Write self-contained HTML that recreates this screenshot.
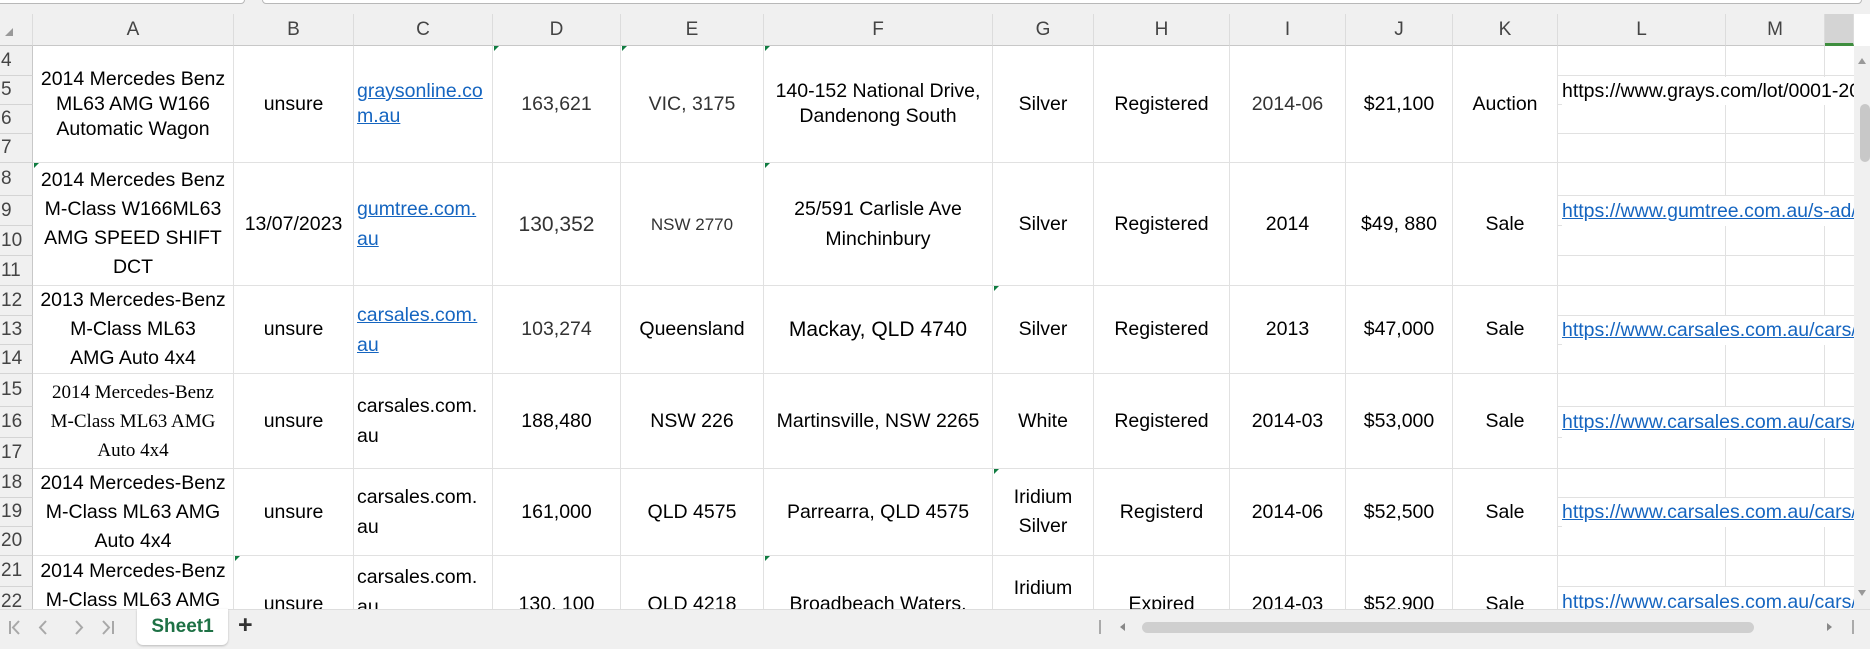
<!DOCTYPE html>
<html><head><meta charset="utf-8"><style>
*{margin:0;padding:0;box-sizing:border-box}
body{width:1870px;height:646px;overflow:hidden;background:#fff;font-family:"Liberation Sans",sans-serif;position:relative}
.a{position:absolute}
.ch{position:absolute;top:14px;height:32px;background:#f0f0f0;border-right:1px solid #dcdcdc;border-bottom:1px solid #c8c8c8;color:#444;font-size:19px;display:flex;align-items:center;justify-content:center}
.rh{position:absolute;left:0;width:33px;background:#f0f0f0;border-bottom:1px solid #d4d4d4;border-right:1px solid #c8c8c8;color:#444;font-size:19px;display:flex;align-items:center;padding-left:1px}
.c{position:absolute;display:flex;align-items:center;justify-content:center;text-align:center;border-right:1px solid #e1e1e1;border-bottom:1px solid #e1e1e1;font-size:19.5px;color:#000;line-height:29px;overflow:hidden;white-space:nowrap}
.lk{color:#1565c0;text-decoration:underline}
.g{color:#333}
.L{position:absolute;left:1562px;width:292px;overflow:hidden;white-space:nowrap;font-size:19.5px;display:flex;align-items:center}
.hl{position:absolute;left:1558px;width:296px;height:1px;background:#e1e1e1}
.tri{position:absolute;width:0;height:0;border-top:5px solid #107c41;border-right:5px solid transparent}
</style></head><body>
<div class="a" style="left:0;top:0;width:1870px;height:14px;background:#f0f0f0"></div>
<div class="a" style="left:-5px;top:-6px;width:250px;height:10px;border:1px solid #b8b8b8;border-radius:4px;background:#fff"></div>
<div class="a" style="left:262px;top:-6px;width:1600px;height:10px;border:1px solid #b8b8b8;border-radius:4px;background:#fff"></div>
<div class="a" style="left:0;top:14px;width:33px;height:32px;background:#f0f0f0;border-right:1px solid #dcdcdc;border-bottom:1px solid #c8c8c8"></div>
<div class="a" style="left:5px;top:28px;width:0;height:0;border-left:8px solid transparent;border-bottom:8px solid #999"></div>

<div class="ch" style="left:33px;width:201px">A</div>
<div class="ch" style="left:234px;width:120px">B</div>
<div class="ch" style="left:354px;width:139px">C</div>
<div class="ch" style="left:493px;width:128px">D</div>
<div class="ch" style="left:621px;width:143px">E</div>
<div class="ch" style="left:764px;width:229px">F</div>
<div class="ch" style="left:993px;width:101px">G</div>
<div class="ch" style="left:1094px;width:136px">H</div>
<div class="ch" style="left:1230px;width:116px">I</div>
<div class="ch" style="left:1346px;width:107px">J</div>
<div class="ch" style="left:1453px;width:105px">K</div>
<div class="ch" style="left:1558px;width:168px">L</div>
<div class="ch" style="left:1726px;width:99px">M</div>
<div class="ch" style="left:1825px;width:29px;background:#d4d4d4;border-bottom:3px solid #3e8e3e"></div>

<div class="rh" style="top:46px;height:30px">4</div>
<div class="rh" style="top:76px;height:29px">5</div>
<div class="rh" style="top:105px;height:29px">6</div>
<div class="rh" style="top:134px;height:29px">7</div>
<div class="rh" style="top:163px;height:33px">8</div>
<div class="rh" style="top:196px;height:30px">9</div>
<div class="rh" style="top:226px;height:30px">10</div>
<div class="rh" style="top:256px;height:30px">11</div>
<div class="rh" style="top:286px;height:30px">12</div>
<div class="rh" style="top:316px;height:29px">13</div>
<div class="rh" style="top:345px;height:29px">14</div>
<div class="rh" style="top:374px;height:33px">15</div>
<div class="rh" style="top:407px;height:31px">16</div>
<div class="rh" style="top:438px;height:31px">17</div>
<div class="rh" style="top:469px;height:29px">18</div>
<div class="rh" style="top:498px;height:29px">19</div>
<div class="rh" style="top:527px;height:29px">20</div>
<div class="rh" style="top:556px;height:31px">21</div>
<div class="rh" style="top:587px;height:31px">22</div>

<!-- block 1 -->
<div class="c" style="left:33px;top:46px;width:201px;height:117px;line-height:25px">2014 Mercedes Benz<br>ML63 AMG W166<br>Automatic Wagon</div>
<div class="c" style="left:234px;top:46px;width:120px;height:117px">unsure</div>
<div class="c" style="left:354px;top:46px;width:139px;height:117px;justify-content:flex-start;text-align:left;padding-left:3px;line-height:25px"><span class="lk">graysonline.co<br>m.au</span></div>
<div class="c g" style="left:493px;top:46px;width:128px;height:117px">163,621</div>
<div class="c g" style="left:621px;top:46px;width:143px;height:117px">VIC, 3175</div>
<div class="c" style="left:764px;top:46px;width:229px;height:117px;line-height:25px">140-152 National Drive,<br>Dandenong South</div>
<div class="c" style="left:993px;top:46px;width:101px;height:117px">Silver</div>
<div class="c" style="left:1094px;top:46px;width:136px;height:117px">Registered</div>
<div class="c g" style="left:1230px;top:46px;width:116px;height:117px">2014-06</div>
<div class="c" style="left:1346px;top:46px;width:107px;height:117px">$21,100</div>
<div class="c" style="left:1453px;top:46px;width:105px;height:117px">Auction</div>

<!-- block 2 -->
<div class="c" style="left:33px;top:163px;width:201px;height:123px">2014 Mercedes Benz<br>M-Class W166ML63<br>AMG SPEED SHIFT<br>DCT</div>
<div class="c" style="left:234px;top:163px;width:120px;height:123px">13/07/2023</div>
<div class="c" style="left:354px;top:163px;width:139px;height:123px;justify-content:flex-start;text-align:left;padding-left:3px;line-height:30px"><span class="lk">gumtree.com.<br>au</span></div>
<div class="c g" style="left:493px;top:163px;width:128px;height:123px;font-size:21px">130,352</div>
<div class="c g" style="left:621px;top:163px;width:143px;height:123px;font-size:17px">NSW 2770</div>
<div class="c" style="left:764px;top:163px;width:229px;height:123px;line-height:30px">25/591 Carlisle Ave<br>Minchinbury</div>
<div class="c" style="left:993px;top:163px;width:101px;height:123px">Silver</div>
<div class="c" style="left:1094px;top:163px;width:136px;height:123px">Registered</div>
<div class="c" style="left:1230px;top:163px;width:116px;height:123px">2014</div>
<div class="c" style="left:1346px;top:163px;width:107px;height:123px">$49, 880</div>
<div class="c" style="left:1453px;top:163px;width:105px;height:123px">Sale</div>

<!-- block 3 -->
<div class="c" style="left:33px;top:286px;width:201px;height:88px">2013 Mercedes-Benz<br>M-Class ML63<br>AMG Auto 4x4</div>
<div class="c" style="left:234px;top:286px;width:120px;height:88px">unsure</div>
<div class="c" style="left:354px;top:286px;width:139px;height:88px;justify-content:flex-start;text-align:left;padding-left:3px;line-height:30px"><span class="lk">carsales.com.<br>au</span></div>
<div class="c g" style="left:493px;top:286px;width:128px;height:88px">103,274</div>
<div class="c" style="left:621px;top:286px;width:143px;height:88px">Queensland</div>
<div class="c" style="left:764px;top:286px;width:229px;height:88px;font-size:21px">Mackay, QLD 4740</div>
<div class="c" style="left:993px;top:286px;width:101px;height:88px">Silver</div>
<div class="c" style="left:1094px;top:286px;width:136px;height:88px">Registered</div>
<div class="c" style="left:1230px;top:286px;width:116px;height:88px">2013</div>
<div class="c" style="left:1346px;top:286px;width:107px;height:88px">$47,000</div>
<div class="c" style="left:1453px;top:286px;width:105px;height:88px">Sale</div>

<!-- block 4 -->
<div class="c" style="left:33px;top:374px;width:201px;height:95px;font-family:'Liberation Serif',serif;font-size:19px;line-height:29px">2014 Mercedes-Benz<br>M-Class ML63 AMG<br>Auto 4x4</div>
<div class="c" style="left:234px;top:374px;width:120px;height:95px">unsure</div>
<div class="c" style="left:354px;top:374px;width:139px;height:95px;justify-content:flex-start;text-align:left;padding-left:3px;line-height:30px">carsales.com.<br>au</div>
<div class="c" style="left:493px;top:374px;width:128px;height:95px">188,480</div>
<div class="c" style="left:621px;top:374px;width:143px;height:95px">NSW 226</div>
<div class="c" style="left:764px;top:374px;width:229px;height:95px">Martinsville, NSW 2265</div>
<div class="c" style="left:993px;top:374px;width:101px;height:95px">White</div>
<div class="c" style="left:1094px;top:374px;width:136px;height:95px">Registered</div>
<div class="c" style="left:1230px;top:374px;width:116px;height:95px">2014-03</div>
<div class="c" style="left:1346px;top:374px;width:107px;height:95px">$53,000</div>
<div class="c" style="left:1453px;top:374px;width:105px;height:95px">Sale</div>

<!-- block 5 -->
<div class="c" style="left:33px;top:469px;width:201px;height:87px">2014 Mercedes-Benz<br>M-Class ML63 AMG<br>Auto 4x4</div>
<div class="c" style="left:234px;top:469px;width:120px;height:87px">unsure</div>
<div class="c" style="left:354px;top:469px;width:139px;height:87px;justify-content:flex-start;text-align:left;padding-left:3px;line-height:30px">carsales.com.<br>au</div>
<div class="c" style="left:493px;top:469px;width:128px;height:87px">161,000</div>
<div class="c" style="left:621px;top:469px;width:143px;height:87px">QLD 4575</div>
<div class="c" style="left:764px;top:469px;width:229px;height:87px">Parrearra, QLD 4575</div>
<div class="c" style="left:993px;top:469px;width:101px;height:87px">Iridium<br>Silver</div>
<div class="c" style="left:1094px;top:469px;width:136px;height:87px">Registerd</div>
<div class="c" style="left:1230px;top:469px;width:116px;height:87px">2014-06</div>
<div class="c" style="left:1346px;top:469px;width:107px;height:87px">$52,500</div>
<div class="c" style="left:1453px;top:469px;width:105px;height:87px">Sale</div>

<!-- block 6 -->
<div class="c" style="left:33px;top:556px;width:201px;height:90px;align-items:flex-start;padding-top:1px">2014 Mercedes-Benz<br>M-Class ML63 AMG<br>Auto 4x4</div>
<div class="c" style="left:234px;top:556px;width:120px;height:90px;align-items:flex-start;padding-top:34px">unsure</div>
<div class="c" style="left:354px;top:556px;width:139px;height:90px;justify-content:flex-start;text-align:left;padding-left:3px;line-height:30px;align-items:flex-start;padding-top:6px">carsales.com.<br>au</div>
<div class="c" style="left:493px;top:556px;width:128px;height:90px;align-items:flex-start;padding-top:34px">130, 100</div>
<div class="c" style="left:621px;top:556px;width:143px;height:90px;align-items:flex-start;padding-top:34px">QLD 4218</div>
<div class="c" style="left:764px;top:556px;width:229px;height:90px;align-items:flex-start;padding-top:34px">Broadbeach Waters,</div>
<div class="c" style="left:993px;top:556px;width:101px;height:90px;align-items:flex-start;padding-top:18px">Iridium<br>Silver</div>
<div class="c" style="left:1094px;top:556px;width:136px;height:90px;align-items:flex-start;padding-top:34px">Expired</div>
<div class="c" style="left:1230px;top:556px;width:116px;height:90px;align-items:flex-start;padding-top:34px">2014-03</div>
<div class="c" style="left:1346px;top:556px;width:107px;height:90px;align-items:flex-start;padding-top:34px">$52,900</div>
<div class="c" style="left:1453px;top:556px;width:105px;height:90px;align-items:flex-start;padding-top:34px">Sale</div>

<div class="a" style="left:1725px;top:46px;width:1px;height:570px;background:#e1e1e1"></div>
<div class="a" style="left:1824px;top:46px;width:1px;height:570px;background:#e1e1e1"></div>
<div class="hl" style="top:75px"></div><div class="hl" style="top:104px"></div><div class="hl" style="top:133px"></div><div class="hl" style="top:162px"></div>
<div class="hl" style="top:195px"></div><div class="hl" style="top:225px"></div><div class="hl" style="top:255px"></div><div class="hl" style="top:285px"></div>
<div class="hl" style="top:315px"></div><div class="hl" style="top:344px"></div><div class="hl" style="top:373px"></div>
<div class="hl" style="top:406px"></div><div class="hl" style="top:437px"></div><div class="hl" style="top:468px"></div>
<div class="hl" style="top:497px"></div><div class="hl" style="top:526px"></div><div class="hl" style="top:555px"></div>
<div class="hl" style="top:586px"></div>
<div class="L" style="top:77px;height:28px;background:#fff">https://www.grays.com/lot/0001-20000000</div>
<div class="L lk" style="top:196px;height:30px;background:#fff">https://www.gumtree.com.au/s-ad/minchinbury</div>
<div class="L lk" style="top:316px;height:29px;background:#fff">https://www.carsales.com.au/cars/details</div>
<div class="L lk" style="top:407px;height:31px;background:#fff">https://www.carsales.com.au/cars/details</div>
<div class="L lk" style="top:498px;height:29px;background:#fff">https://www.carsales.com.au/cars/details</div>
<div class="L lk" style="top:587px;height:30px;background:#fff">https://www.carsales.com.au/cars/details</div>

<div class="tri" style="left:494px;top:46px"></div>
<div class="tri" style="left:622px;top:46px"></div>
<div class="tri" style="left:765px;top:46px"></div>
<div class="tri" style="left:34px;top:163px"></div>
<div class="tri" style="left:765px;top:163px"></div>
<div class="tri" style="left:994px;top:286px"></div>
<div class="tri" style="left:994px;top:469px"></div>
<div class="tri" style="left:235px;top:556px"></div>
<div class="tri" style="left:765px;top:556px"></div>

<div class="a" style="left:1854px;top:46px;width:16px;height:563px;background:#f0f0f0"></div>
<div class="a" style="left:1858px;top:58px;width:0;height:0;border-left:4px solid transparent;border-right:4px solid transparent;border-bottom:6px solid #999"></div>
<div class="a" style="left:1860px;top:104px;width:10px;height:58px;background:#c8c8c8;border-radius:5px"></div>
<div class="a" style="left:1858px;top:590px;width:0;height:0;border-left:4px solid transparent;border-right:4px solid transparent;border-top:6px solid #999"></div>

<div class="a" style="left:0;top:609px;width:1870px;height:40px;background:#f0f0f0;border-top:1px solid #ddd"></div>
<svg class="a" style="left:0;top:609px" width="130" height="37" viewBox="0 0 130 37">
<g fill="none" stroke="#a8a8a8" stroke-width="2">
<path d="M10 12v13M19 12l-6 6.5 6 6.5"/>
<path d="M46 12l-6 6.5 6 6.5"/>
<path d="M76 12l6 6.5-6 6.5"/>
<path d="M103 12l6 6.5-6 6.5M113 12v13"/>
</g></svg>
<div class="a" style="left:137px;top:609px;width:91px;height:36px;background:#fff;border-radius:0 0 6px 6px;box-shadow:0 1px 2px #bbb;color:#1e7145;font-weight:bold;font-size:19px;display:flex;align-items:center;justify-content:center">Sheet1</div>
<div class="a" style="left:238px;top:611px;font-size:25px;font-weight:bold;color:#333">+</div>
<div class="a" style="left:1099px;top:620px;width:2px;height:14px;background:#aaa"></div>
<div class="a" style="left:1120px;top:623px;width:0;height:0;border-top:4px solid transparent;border-bottom:4px solid transparent;border-right:5px solid #888"></div>
<div class="a" style="left:1142px;top:622px;width:612px;height:11px;background:#cfcfcf;border-radius:6px"></div>
<div class="a" style="left:1827px;top:623px;width:0;height:0;border-top:4px solid transparent;border-bottom:4px solid transparent;border-left:5px solid #888"></div>
<div class="a" style="left:1852px;top:620px;width:2px;height:14px;background:#aaa"></div>
</body></html>
